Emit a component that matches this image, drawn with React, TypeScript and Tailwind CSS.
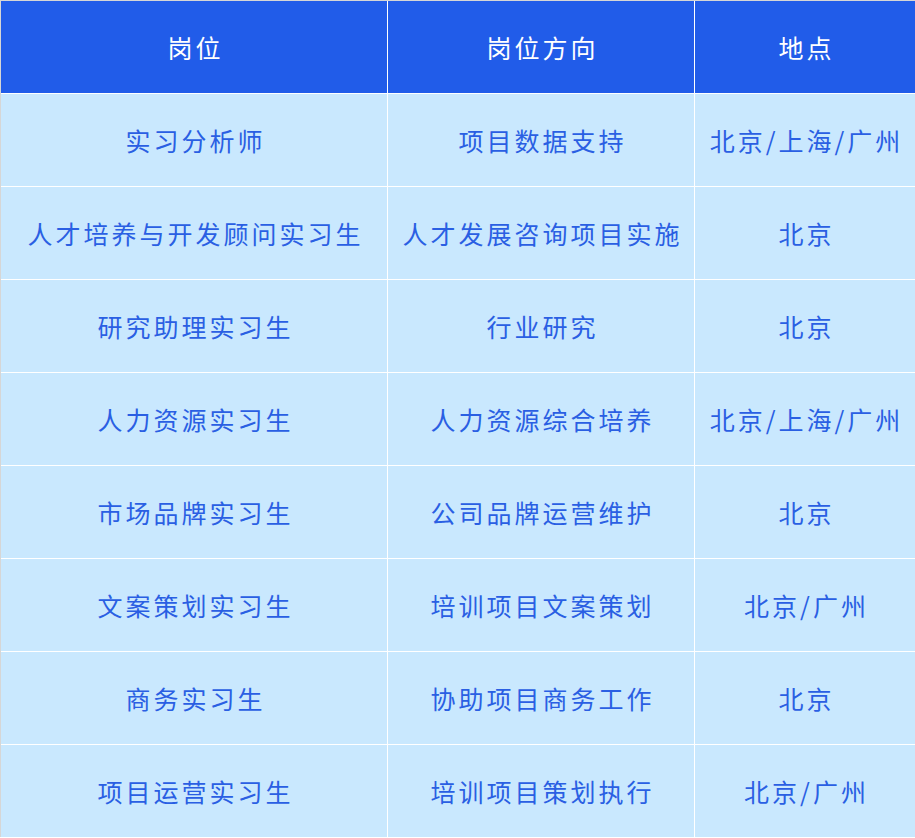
const rows: [string, string, string][] = [
  ["实习分析师", "项目数据支持", "北京/上海/广州"],
  ["人才培养与开发顾问实习生", "人才发展咨询项目实施", "北京"],
  ["研究助理实习生", "行业研究", "北京"],
  ["人力资源实习生", "人力资源综合培养", "北京/上海/广州"],
  ["市场品牌实习生", "公司品牌运营维护", "北京"],
  ["文案策划实习生", "培训项目文案策划", "北京/广州"],
  ["商务实习生", "协助项目商务工作", "北京"],
  ["项目运营实习生", "培训项目策划执行", "北京/广州"],
];

const font = { fontFamily: '"Noto Sans CJK SC", "Noto Sans", sans-serif' };

export default function App() {
  return (
    <div className="w-[915px] h-[838px] overflow-hidden bg-white" style={font}>
      <div className="grid grid-cols-[386px_306px_1fr] gap-px bg-white border-l border-t border-[#d6d6d6]">
        {["岗位", "岗位方向", "地点"].map((h) => (
          <div
            key={h}
            className="h-[92px] flex items-center justify-center bg-[#215ce9] text-white text-[25px] tracking-[3px] pt-px pl-[3px]"
          >
            {h}
          </div>
        ))}
        {rows.map((r, i) =>
          r.map((c, j) => (
            <div
              key={`${i}-${j}`}
              className="h-[92px] flex items-center justify-center bg-[#c9e8fe] text-[#2a5fe3] text-[25px] tracking-[3px] whitespace-nowrap pt-px pl-[3px]"
            >
              {c}
            </div>
          ))
        )}
      </div>
    </div>
  );
}
